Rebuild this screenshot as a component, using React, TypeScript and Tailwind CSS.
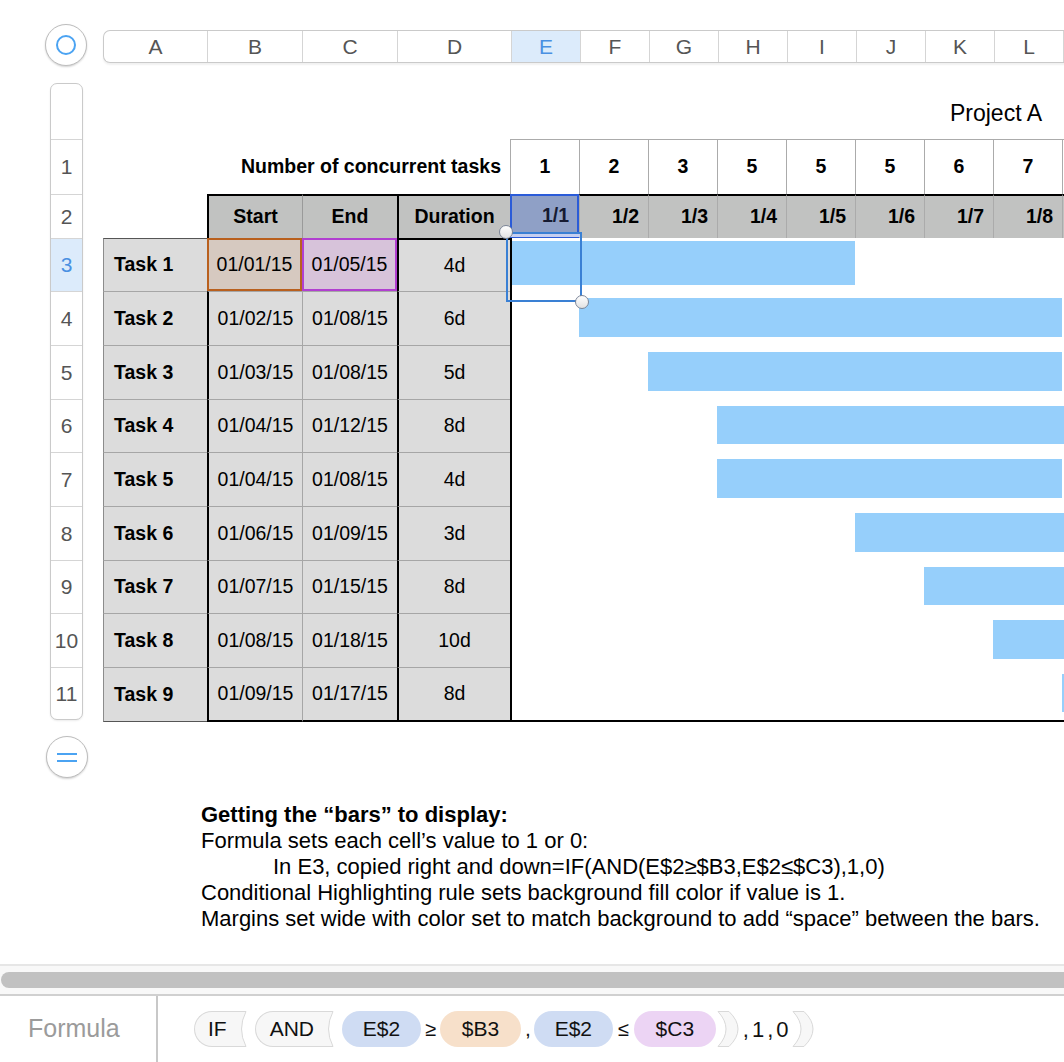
import React from 'react';

type Task = { name: string; start: string; end: string; dur: string };

const tasks: Task[] = [
  { name: 'Task 1', start: '01/01/15', end: '01/05/15', dur: '4d' },
  { name: 'Task 2', start: '01/02/15', end: '01/08/15', dur: '6d' },
  { name: 'Task 3', start: '01/03/15', end: '01/08/15', dur: '5d' },
  { name: 'Task 4', start: '01/04/15', end: '01/12/15', dur: '8d' },
  { name: 'Task 5', start: '01/04/15', end: '01/08/15', dur: '4d' },
  { name: 'Task 6', start: '01/06/15', end: '01/09/15', dur: '3d' },
  { name: 'Task 7', start: '01/07/15', end: '01/15/15', dur: '8d' },
  { name: 'Task 8', start: '01/08/15', end: '01/18/15', dur: '10d' },
  { name: 'Task 9', start: '01/09/15', end: '01/17/15', dur: '8d' },
];

// columns E..M hold the days 1/1 .. 1/9 (M is only a sliver at the right edge)
const days = [1, 2, 3, 4, 5, 6, 7, 8, 9];
const visibleDays = 8;
const dayOf = (d: string) => parseInt(d.split('/')[1], 10);
const isActive = (t: Task, day: number) => dayOf(t.start) <= day && day <= dayOf(t.end);
const concurrent = days.map((day) => tasks.filter((t) => isActive(t, day)).length);

const letters = ['A', 'B', 'C', 'D', 'E', 'F', 'G', 'H', 'I', 'J', 'K', 'L', ''];
const headerWidths = [
  'w-[103px]', 'w-[95px]', 'w-[95px]', 'w-[114px]',
  'w-[69px]', 'w-[69px]', 'w-[69px]', 'w-[69px]', 'w-[69px]', 'w-[69px]', 'w-[69px]', 'w-[69px]', 'w-[69px]',
];

const rowHeaderHeights = [
  'h-[55px]', 'h-[55px]', 'h-[44px]', 'h-[53px]', 'h-[54px]', 'h-[54px]', 'h-[53px]',
  'h-[54px]', 'h-[54px]', 'h-[53px]', 'h-[54px]', 'h-[52px]',
];
const taskRowHeights = ['h-[53px]', 'h-[54px]', 'h-[54px]', 'h-[53px]', 'h-[54px]', 'h-[54px]', 'h-[53px]', 'h-[54px]', 'h-[55px]'];

const FnToken = ({ label, pl }: { label: string; pl: string }) => (
  <div className="flex h-[36px] shrink-0">
    <div className={`flex items-center rounded-l-full border border-r-0 border-[#d9d9d9] bg-[#f7f7f7] ${pl} pr-[9px]`}>
      {label}
    </div>
    <svg width="11" height="36" viewBox="0 0 11 36" className="shrink-0">
      <path d="M0 0.5 H10 Q1 18 10 35.5 H0" fill="#f7f7f7" stroke="#d9d9d9" />
    </svg>
  </div>
);

const CloseToken = () => (
  <svg width="24" height="36" viewBox="0 0 24 36" className="shrink-0">
    <path d="M1 0.5 Q17 18 1 35.5 H12 Q30 18 12 0.5 Z" fill="#f7f7f7" stroke="#d9d9d9" />
  </svg>
);

const Pill = ({ label, color, w }: { label: string; color: string; w: string }) => (
  <div className={`flex h-[36px] ${w} shrink-0 items-center justify-center rounded-full ${color}`}>{label}</div>
);

export default function App() {
  return (
    <div className="relative flex h-[1062px] w-[1064px] flex-col overflow-hidden bg-white font-['Liberation_Sans',Arial,sans-serif] text-black">
      {/* column header */}
      <div className="flex shrink-0 items-start">
        <div className="ml-[45px] mt-[24px] flex h-[42px] w-[42px] shrink-0 items-center justify-center rounded-full border border-[#bdbdbd] bg-white shadow-[0_1px_2px_rgba(0,0,0,0.18)]">
          <div className="h-[20px] w-[20px] rounded-full border-2 border-[#4ba3f2]" />
        </div>
        <div className="ml-[16px] mt-[30px] flex h-[33px] shrink-0 overflow-hidden rounded-l-[7px] border border-r-0 border-[#cacaca] bg-white shadow-[0_2px_2px_rgba(0,0,0,0.06)]">
          {letters.map((l, i) => (
            <div
              key={i}
              className={`${headerWidths[i]} flex shrink-0 items-center justify-center text-[21px] ${i > 0 ? 'border-l border-[#d5d5d5]' : ''} ${
                l === 'E' ? 'bg-[#dcebfb] text-[#4a90e2]' : 'text-[#555]'
              }`}
            >
              {l}
            </div>
          ))}
        </div>
      </div>

      <div className="mt-[17px] flex shrink-0 items-start">
        {/* row header */}
        <div className="ml-[50px] flex w-[33px] shrink-0 flex-col items-center">
          <div className="w-[33px] overflow-hidden rounded-[7px] border border-[#cacaca] bg-white shadow-[0_1px_2px_rgba(0,0,0,0.08)]">
            {rowHeaderHeights.map((h, i) => (
              <div
                key={i}
                className={`${h} flex items-center justify-center text-[21px] ${i > 0 ? 'border-t border-[#d5d5d5]' : ''} ${
                  i === 3 ? 'bg-[#dcebfb] text-[#4a90e2]' : 'text-[#555]'
                }`}
              >
                {i > 0 ? i : ''}
              </div>
            ))}
          </div>
          <div className="mt-[16px] flex h-[42px] w-[42px] shrink-0 flex-col items-center justify-center gap-[5px] rounded-full border border-[#bdbdbd] bg-white shadow-[0_1px_2px_rgba(0,0,0,0.18)]">
            <div className="h-[2px] w-[20px] bg-[#4ba3f2]" />
            <div className="h-[2px] w-[20px] bg-[#4ba3f2]" />
          </div>
        </div>

        {/* table */}
        <div className="relative ml-[20px] shrink-0 text-[19.5px]">
          <div className="flex h-[56px] w-[939px] items-center justify-end pt-[4px] text-[23px]">Project A</div>

          <div className="flex h-[55px]">
            <div className="flex w-[407px] shrink-0 items-center justify-end pr-[9px] font-bold">Number of concurrent tasks</div>
            {concurrent.map((n, i) => (
              <div key={i} className="flex w-[69px] shrink-0 items-center justify-center border-l border-t border-[#ababab] font-bold">
                {i < visibleDays ? n : ''}
              </div>
            ))}
          </div>

          <div className="flex h-[44px]">
            <div className="w-[104px] shrink-0" />
            <div className="flex w-[95px] shrink-0 items-center justify-center border-l-2 border-t-2 border-black bg-[#c1c2c1] font-bold">Start</div>
            <div className="flex w-[95px] shrink-0 items-center justify-center border-l border-t-2 border-l-[#9a9a9a] border-t-black bg-[#c1c2c1] font-bold">End</div>
            <div className="flex w-[113px] shrink-0 items-center justify-center border-l-2 border-t-2 border-black bg-[#c1c2c1] font-bold">Duration</div>
            {days.map((d, i) =>
              i === 0 ? (
                <div key={d} className="flex w-[69px] shrink-0 items-center justify-end border-2 border-[#2a5bd8] bg-[#8fa0c6] pr-[8px] font-bold text-[#161b33]">
                  1/{d}
                </div>
              ) : (
                <div key={d} className="flex w-[69px] shrink-0 items-center justify-end border-l border-t-2 border-l-[#ababab] border-t-black bg-[#c1c2c1] pr-[9px] font-bold">
                  {i < visibleDays ? `1/${d}` : ''}
                </div>
              ),
            )}
          </div>

          {tasks.map((t, r) => {
            const first = r === 0;
            const last = r === tasks.length - 1;
            const bottom = last ? 'border-b-2 border-b-black' : '';
            return (
              <div key={t.name} className={`flex ${taskRowHeights[r]}`}>
                <div
                  className={`flex w-[104px] shrink-0 items-center border-l border-t border-l-[#8c8c8c] bg-[#dcdcdc] pl-[10px] font-bold ${
                    first ? 'border-t-[#555]' : 'border-t-[#a6a6a6]'
                  } ${last ? 'border-b border-b-[#555]' : ''}`}
                >
                  {t.name}
                </div>
                <div
                  className={`flex w-[95px] shrink-0 items-center justify-center ${
                    first ? 'border-2 border-[#b9601e] bg-[#d6c9c0]' : `border-l-2 border-t border-l-black border-t-[#a6a6a6] bg-[#dcdcdc] ${bottom}`
                  }`}
                >
                  {t.start}
                </div>
                <div
                  className={`flex w-[95px] shrink-0 items-center justify-center ${
                    first ? 'border-2 border-[#b13fd0] bg-[#d7c3da]' : `border-l border-t border-[#a6a6a6] bg-[#dcdcdc] ${bottom}`
                  }`}
                >
                  {t.end}
                </div>
                <div
                  className={`flex w-[113px] shrink-0 items-center justify-center border-l-2 border-l-black bg-[#dcdcdc] ${
                    first ? 'border-t-2 border-t-black' : 'border-t border-t-[#a6a6a6]'
                  } ${bottom}`}
                >
                  {t.dur}
                </div>
                {days.map((d, i) => (
                  <div
                    key={d}
                    className={`w-[69px] shrink-0 ${i === 0 ? 'border-l-2 border-l-black' : ''} ${bottom} ${
                      first ? 'pb-[6px] pt-[3px]' : 'pb-[8px] pt-[7px]'
                    }`}
                  >
                    <div className={`h-full ${isActive(t, d) ? 'bg-[#96cffb]' : ''}`} />
                  </div>
                ))}
              </div>
            );
          })}

          {/* E3 selection */}
          <div className="absolute left-[403px] top-[149px] h-[70px] w-[76px] border-2 border-[#3a80d4]">
            <div className="h-[3px] w-full bg-[#c6cff0]" />
          </div>
          <div className="absolute left-[396px] top-[142px] h-[14px] w-[14px] rounded-full border-[1.5px] border-[#7c8698] bg-gradient-to-b from-white to-[#e2e2e2]" />
          <div className="absolute left-[472px] top-[212px] h-[14px] w-[14px] rounded-full border-[1.5px] border-[#7c8698] bg-gradient-to-b from-white to-[#e2e2e2]" />
        </div>
      </div>

      {/* notes */}
      <div className="mt-[24px] whitespace-nowrap pl-[201px] text-[22px] leading-[26px]">
        <p className="font-bold">Getting the “bars” to display:</p>
        <p>Formula sets each cell’s value to 1 or 0:</p>
        <p className="pl-[72px]">In E3, copied right and down=IF(AND(E$2≥$B3,E$2≤$C3),1,0)</p>
        <p>Conditional Highlighting rule sets background fill color if value is 1.</p>
        <p>Margins set wide with color set to match background to add “space” between the bars.</p>
      </div>

      {/* scroller + formula bar */}
      <div className="mt-auto shrink-0">
        <div className="h-[2px] bg-[#e6e6e6]" />
        <div className="h-[28px] bg-[#f8f8f8] pt-[6px]">
          <div className="ml-[1px] h-[16px] rounded-l-full bg-[#c1c1c1]" />
        </div>
        <div className="h-[2px] bg-[#d0d0d0]" />
        <div className="flex h-[66px] items-center">
          <div className="w-[156px] shrink-0 pl-[28px] text-[25px] text-[#9b9b9b]">Formula</div>
          <div className="w-[2px] shrink-0 self-stretch bg-[#c8c8c8]" />
          <div className="ml-[36px] flex items-center text-[21px] text-[#111]">
            <FnToken label="IF" pl="pl-[13px]" />
            <div className="ml-[8px]">
              <FnToken label="AND" pl="pl-[14px]" />
            </div>
            <div className="ml-[8px]">
              <Pill label="E$2" color="bg-[#cfdcf3]" w="w-[79px]" />
            </div>
            <span className="mx-[4px] text-[20px]">≥</span>
            <Pill label="$B3" color="bg-[#f7e0ca]" w="w-[81px]" />
            <span className="ml-[4px] mr-[3px]">,</span>
            <Pill label="E$2" color="bg-[#cfdcf3]" w="w-[79px]" />
            <span className="ml-[5px] mr-[5px] text-[20px]">≤</span>
            <Pill label="$C3" color="bg-[#ecd4f4]" w="w-[82px]" />
            <div className="ml-[1px]">
              <CloseToken />
            </div>
            <span className="ml-[2px] text-[22px] tracking-[3px]">,1,0</span>
            <CloseToken />
          </div>
        </div>
      </div>
    </div>
  );
}
